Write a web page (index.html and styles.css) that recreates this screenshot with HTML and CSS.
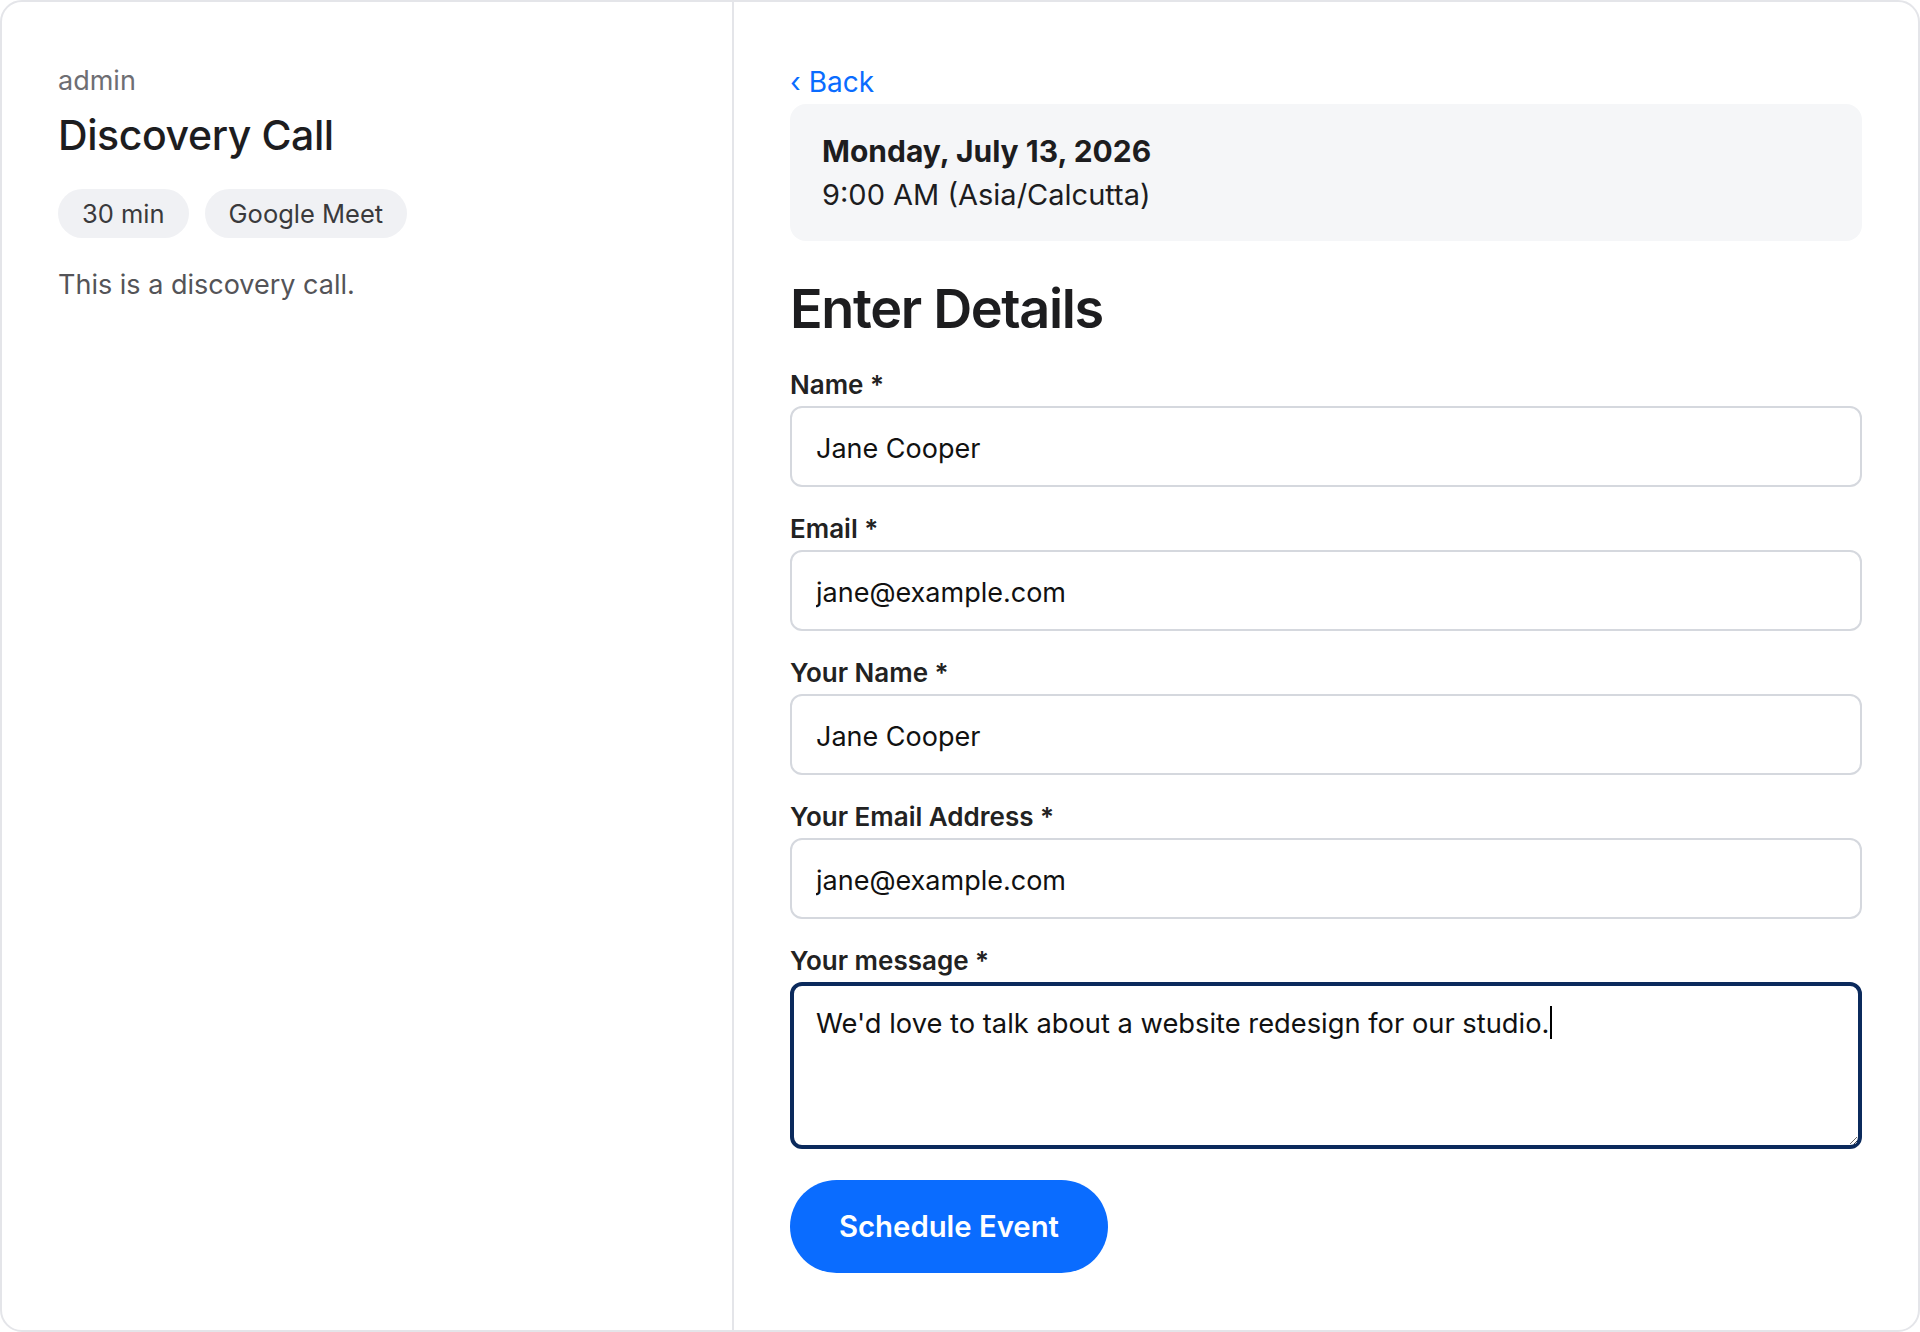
FILE: index.html
```html
<!DOCTYPE html>
<html lang="en">
<head>
    <meta charset="UTF-8">
    <meta name="viewport" content="width=device-width, initial-scale=1.0">
    <title>Discovery Call - Enter Details</title>
    <link rel="stylesheet" href="styles.css">
</head>
<body>

    <div class="booking">
        <!-- Event summary -->
        <aside class="event-info">
            <p class="host">admin</p>
            <h1 class="event-title">Discovery Call</h1>
            <div class="chips">
                <span class="chip">30 min</span>
                <span class="chip">Google Meet</span>
            </div>
            <p class="event-desc">This is a discovery call.</p>
        </aside>

        <!-- Invitee details -->
        <main class="details">
            <a href="#" class="back">&lsaquo; Back</a>

            <div class="slot">
                <div class="slot-date">Monday, July 13, 2026</div>
                <div class="slot-time">9:00 AM (Asia/Calcutta)</div>
            </div>

            <h2>Enter Details</h2>

            <form class="details-form">
                <div class="field">
                    <label for="name">Name *</label>
                    <input type="text" id="name" value="Jane Cooper" required>
                </div>
                <div class="field">
                    <label for="email">Email *</label>
                    <input type="email" id="email" value="jane@example.com" required>
                </div>
                <div class="field">
                    <label for="yourName">Your Name *</label>
                    <input type="text" id="yourName" value="Jane Cooper" required>
                </div>
                <div class="field">
                    <label for="yourEmail">Your Email Address *</label>
                    <input type="email" id="yourEmail" value="jane@example.com" required>
                </div>
                <div class="field field-last">
                    <label for="message">Your message *</label>
                    <div class="message-box">
                        <textarea id="message" required>We'd love to talk about a website redesign for our studio.</textarea>
                        <span class="caret" id="caret"></span>
                    </div>
                </div>
                <button type="button" class="submit">Schedule Event</button>
            </form>
        </main>
    </div>

    <script>
        const message = document.getElementById('message');
        const caret = document.getElementById('caret');

        // keep the typing cursor after the last character
        function placeCaret() {
            const style = getComputedStyle(message);
            const ctx = document.createElement('canvas').getContext('2d');
            ctx.font = style.fontWeight + ' ' + style.fontSize + ' ' + style.fontFamily;
            const lastLine = message.value.split('\n').pop();
            const left = parseFloat(style.borderLeftWidth) + parseFloat(style.paddingLeft) + ctx.measureText(lastLine).width + 1;
            caret.style.left = left + 'px';
        }

        message.focus();
        message.setSelectionRange(message.value.length, message.value.length);
        document.fonts.ready.then(placeCaret);
        message.addEventListener('input', placeCaret);
    </script>

</body>
</html>
```

FILE: styles.css
```css
* {
    box-sizing: border-box;
}

html, body {
    margin: 0;
    height: 100%;
}

body {
    font-family: Inter, "Noto Sans", sans-serif;
    color: #1d1d1f;
    background: #fff;
}

.booking {
    display: flex;
    height: 100vh;
    border: 2px solid #e4e5e9;
    border-radius: 22px;
    overflow: hidden;
}

/* left column */
.event-info {
    width: 732px;
    flex-shrink: 0;
    border-right: 2px solid #e4e5e9;
    padding: 59px 56px;
}

.host {
    margin: 0;
    font-size: 27px;
    line-height: 40px;
    color: #6e6e73;
}

.event-title {
    margin: 7px 0 26px;
    font-size: 41px;
    font-weight: 500;
    line-height: 55px;
    letter-spacing: -0.01em;
}

.chips {
    display: flex;
    gap: 16px;
}

.chip {
    height: 49px;
    line-height: 49px;
    padding: 0 24px;
    border-radius: 25px;
    background: #f0f1f4;
    color: #3a3a3c;
    font-size: 25.5px;
}

.event-desc {
    margin: 27px 0 0;
    font-size: 27px;
    line-height: 40px;
    color: #545458;
}

/* right column */
.details {
    flex: 1;
    padding: 60px 56px;
}

.back {
    display: inline-block;
    font-size: 28px;
    line-height: 40px;
    color: #0a6cff;
    text-decoration: none;
    margin-bottom: 2px;
}

.slot {
    background: #f5f6f8;
    border-radius: 16px;
    padding: 25px 32px 24px;
    font-size: 29px;
    line-height: 44px;
}

.slot-date {
    font-size: 30px;
    font-weight: 700;
}

h2 {
    margin: 34px 0 25px;
    font-size: 54px;
    font-weight: 600;
    line-height: 67px;
    letter-spacing: -0.025em;
}

.field {
    margin-bottom: 24px;
}

.field-last {
    margin-bottom: 31px;
}

.field label {
    display: block;
    margin-bottom: 4px;
    font-size: 26px;
    font-weight: 600;
    line-height: 35px;
    color: #222;
}

.field input,
.field textarea {
    display: block;
    width: 100%;
    font-family: inherit;
    font-size: 27px;
    color: #111;
    border: 2px solid #d5d8de;
    border-radius: 12px;
    background: #fff;
}

.field input {
    height: 81px;
    padding: 3px 24px 0;
}

.message-box {
    position: relative;
}

.field textarea {
    height: 167px;
    padding: 18px 22px;
    font-size: 27.3px;
    line-height: 40px;
    resize: vertical;
}

.field input:focus,
.field textarea:focus {
    outline: none;
    border: 4px solid #0b2a5c;
}

.caret {
    position: absolute;
    top: 24px;
    left: 0;
    width: 2px;
    height: 33px;
    background: #000;
}

.submit {
    height: 93px;
    padding: 0 49px;
    border: none;
    border-radius: 47px;
    background: #0a6cff;
    color: #fff;
    font-family: inherit;
    font-size: 29.3px;
    font-weight: 600;
    cursor: pointer;
}
```
